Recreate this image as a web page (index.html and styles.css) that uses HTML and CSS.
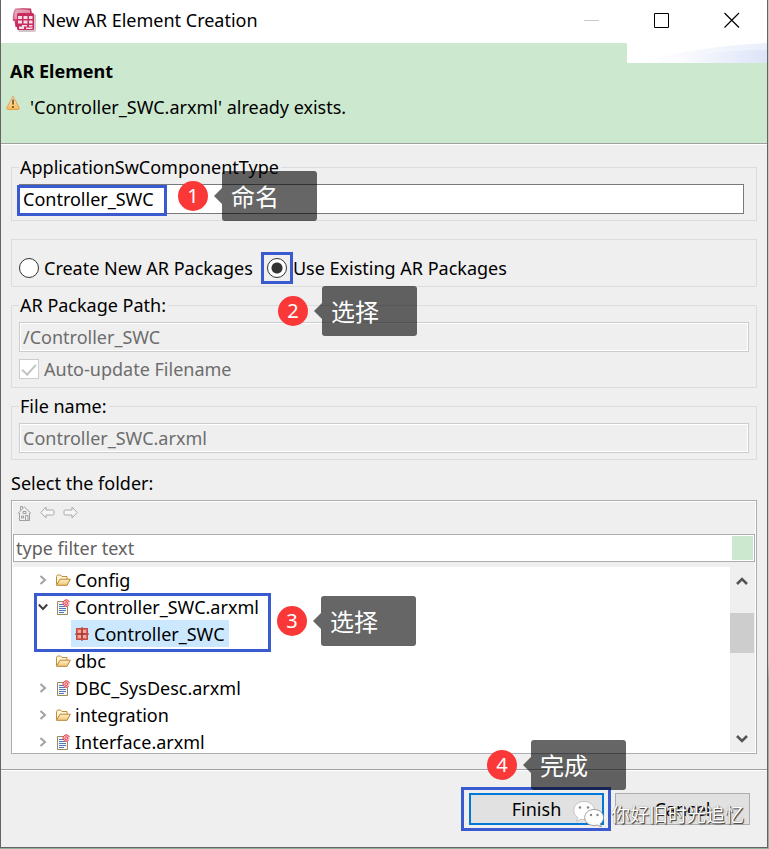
FILE: index.html
```html
<!DOCTYPE html>
<html lang="en">
<head>
<meta charset="utf-8">
<meta name="viewport" content="width=device-width, initial-scale=1">
<title>New AR Element Creation</title>
<link rel="stylesheet" href="styles.css">
</head>
<body>
<svg class="defs" aria-hidden="true">
  <defs>
    <linearGradient id="folderFill" x1="0" y1="0" x2="0" y2="1"><stop offset="0" stop-color="#fdf0c4"/><stop offset="1" stop-color="#efc778"/></linearGradient>
    <linearGradient id="warnFill" x1="0" y1="0" x2="0" y2="1"><stop offset="0" stop-color="#fff3d8"/><stop offset="1" stop-color="#f7b850"/></linearGradient>
    <linearGradient id="appFill" x1="0" y1="0" x2="1" y2="1"><stop offset="0" stop-color="#e2a0b4"/><stop offset="0.5" stop-color="#c2305f"/><stop offset="1" stop-color="#b4224f"/></linearGradient>
    <linearGradient id="bannerFill" x1="0" y1="0" x2="1" y2="0"><stop offset="0" stop-color="#ffffff"/><stop offset="0.35" stop-color="#fafbfe"/><stop offset="1" stop-color="#dce4f7"/></linearGradient>
    <linearGradient id="bannerGlow" x1="0" y1="0" x2="1" y2="0"><stop offset="0" stop-color="#ffffff"/><stop offset="1" stop-color="#e9effb"/></linearGradient>
    <symbol id="folder" viewBox="0 0 16 14">
      <path d="M1.5 11.5V3.5l1-1.500h3l1.500 1.500h5V6" fill="#fff6d8" stroke="#c48a3c"/>
      <path d="M1.500 12.300L5 6.200h10.300l-3.200 6.100z" fill="url(#folderFill)" stroke="#bd8234"/>
    </symbol>
    <symbol id="arxml" viewBox="0 0 14 16">
      <path d="M1.500 2.500H11.500V15.500H1.500z" fill="#f3f7fc" stroke="#9a8a54"/>
      <path d="M3 5.500h4M3 7.500h6M3 9.500h7M3 11.500h7M3 13.500h5" stroke="#5378b4"/>
      <circle cx="10.300" cy="4" r="3.500" fill="#fbc9cc"/>
      <path d="M12.500 6.400A3.200 3.200 0 1 1 13.300 3M10.500 5.800c-2 .2-2.300-2.700-.3-3 2-.2 2 2.600.4 2.700" fill="none" stroke="#e23440"/>
    </symbol>
    <symbol id="chev" viewBox="0 0 8 10"><path d="M1.500 1L6 5 1.500 9" fill="none" stroke="#a2a2a2" stroke-width="2"/></symbol>
  </defs>
</svg>

<header class="titlebar">
  <svg class="app-icon" viewBox="0 0 24 24" aria-hidden="true">
    <path d="M3 .5Q10-.5 19 .5L20 6H6v13H3.500L2.500 13H1Q0 5 3 .5z" fill="url(#appFill)"/>
    <path d="M4 2Q10 1 18 2V5H6v6H2.500Q2 5 4 2z" fill="#efb9c8" opacity=".7"/>
    <rect x="6" y="6" width="18" height="18" rx="2" fill="#d3c6cb"/>
    <rect x="5" y="5" width="17" height="17" rx="1.500" fill="#c62c5f"/>
    <path d="M6 8h4v3H6zM11.500 8h4v3h-4zM17 8h3.500v3H17zM6 12.500h4v3H6zM11.500 12.500h4v3h-4zM17 12.500h3.500v3H17zM7 18.500h3v-1.500h5v1.500h-3V21H7zM17 17h3.500v1.500H17zM14 19.500h6.500V21H14z" fill="#f8dce5"/>
  </svg>
  <h1 class="title">New AR Element Creation</h1>
  <div class="win-controls">
    <button type="button" aria-label="Minimize" disabled><svg viewBox="0 0 16 16"><path d="M0 8.500h15" stroke="#c8c8c8"/></svg></button>
    <button type="button" aria-label="Maximize"><svg viewBox="0 0 16 16"><path d="M.5 1.500h14v14H.5z" fill="none" stroke="#000"/></svg></button>
    <button type="button" aria-label="Close"><svg viewBox="0 0 16 16"><path d="M.5 1L15 15.500M15 1L.5 15.500" stroke="#000" stroke-width="1.200"/></svg></button>
  </div>
</header>

<section class="banner">
  <h2>AR Element</h2>
  <p>
    <svg class="warn" viewBox="0 0 14 16" aria-hidden="true"><path d="M7 1.200L13 12.500Q13.600 14.500 12 14.500H2Q.4 14.500 1 12.500z" fill="url(#warnFill)" stroke="#e0a258"/><path d="M7 4.500v5M7 11v2" stroke="#7a5020" stroke-width="1.700"/></svg>
    <span>'Controller_SWC.arxml' already exists.</span>
  </p>
  <svg class="banner-art" viewBox="0 0 140 20" preserveAspectRatio="none" aria-hidden="true"><path d="M0 0h140v20H0z" fill="#fff"/><path d="M10 20Q70 3 140 0V20z" fill="url(#bannerGlow)"/><path d="M10 20Q80 7 140 7V20z" fill="url(#bannerFill)"/></svg>
</section>

<main class="content">
  <fieldset class="group type-group">
    <legend><label for="type">ApplicationSwComponentType</label></legend>
    <input class="field" id="type" type="text" value="Controller_SWC">
    <span class="mark mark-name"></span>
    <div class="callout callout-1"><span class="num">1</span><span class="tip">命名</span></div>
  </fieldset>

  <fieldset class="group mode-group" aria-label="Package mode">
    <label class="choice"><input type="radio" name="mode"><span>Create New AR Packages</span></label>
    <label class="choice marked"><input type="radio" name="mode" checked><span>Use Existing AR Packages</span></label>
  </fieldset>

  <fieldset class="group">
    <legend><label for="path">AR Package Path:</label></legend>
    <input class="field" id="path" type="text" value="/Controller_SWC" disabled>
    <label class="choice check"><input type="checkbox" checked disabled><span>Auto-update Filename</span></label>
    <div class="callout callout-2"><span class="num">2</span><span class="tip">选择</span></div>
  </fieldset>

  <fieldset class="group">
    <legend><label for="file">File name:</label></legend>
    <input class="field" id="file" type="text" value="Controller_SWC.arxml" disabled>
  </fieldset>

  <label class="folder-label" for="filter">Select the folder:</label>
  <div class="browser">
    <div class="tools">
      <button type="button" aria-label="Home" disabled><svg viewBox="0 0 15 16"><path d="M2.500 8v7.500h10V8M.8 8.500L7.500 2l6.700 6.500M3.500 5V1.500h2V3M6 6.500h3v2H6zM4.500 11h2v2h-2zM8.500 15v-4.500H11V15" fill="none" stroke="#a0a0a0"/></svg></button>
      <button type="button" aria-label="Back" disabled><svg viewBox="0 0 15 16"><path d="M.8 7.500L6 2v3h6.500q1.500 0 1.500 1v3q0 1-1.500 1H6v3z" fill="#f6f6f6" stroke="#aaa"/></svg></button>
      <button type="button" aria-label="Forward" disabled><svg viewBox="0 0 15 16"><path d="M14.200 7.500L9 2v3H2.500Q1 5 1 6v3q0 1 1.500 1H9v3z" fill="#f6f6f6" stroke="#aaa"/></svg></button>
    </div>
    <div class="filter"><input id="filter" type="text" placeholder="type filter text"><button type="button" aria-label="Clear filter"></button></div>
    <div class="tree-area">
      <ul class="tree">
        <li class="row"><svg class="chev"><use href="#chev"/></svg><svg class="ico"><use href="#folder"/></svg><span>Config</span></li>
        <li class="branch">
          <div class="row"><svg class="chev open" viewBox="0 0 10 8"><path d="M.8 1.500L5 6l4.200-4.500" fill="none" stroke="#404040" stroke-width="2"/></svg><svg class="ico"><use href="#arxml"/></svg><span>Controller_SWC.arxml</span></div>
          <ul>
            <li class="row selected"><svg class="pkg" viewBox="0 0 14 14" aria-hidden="true"><path d="M1 1h12v12H1z" fill="#d9675c"/><path d="M3 3h3v3H3zM8 3h3v3H8zM3 8h3v3H3zM8 8h3v3H8z" fill="#f3aa98"/><path d="M7 0v14M0 7h14" stroke="#94292c"/><path d="M1.500 1.500h11v11h-11z" fill="none" stroke="#c04d48"/></svg><span>Controller_SWC</span></li>
          </ul>
          <span class="mark mark-branch"></span>
        </li>
        <li class="row"><span class="chev"></span><svg class="ico"><use href="#folder"/></svg><span>dbc</span></li>
        <li class="row"><svg class="chev"><use href="#chev"/></svg><svg class="ico"><use href="#arxml"/></svg><span>DBC_SysDesc.arxml</span></li>
        <li class="row"><svg class="chev"><use href="#chev"/></svg><svg class="ico"><use href="#folder"/></svg><span>integration</span></li>
        <li class="row"><svg class="chev"><use href="#chev"/></svg><svg class="ico"><use href="#arxml"/></svg><span>Interface.arxml</span></li>
      </ul>
      <div class="scroll">
        <button type="button" aria-label="Scroll up"><svg viewBox="0 0 12 10"><path d="M1 8l5-5 5 5" fill="none" stroke="#555" stroke-width="2.600"/></svg></button>
        <div class="track"><div class="thumb"></div></div>
        <button type="button" aria-label="Scroll down"><svg viewBox="0 0 12 10"><path d="M1 3l5 5 5-5" fill="none" stroke="#555" stroke-width="2.600"/></svg></button>
      </div>
      <div class="callout callout-3"><span class="num">3</span><span class="tip">选择</span></div>
    </div>
  </div>
</main>

<footer class="footer">
  <div class="finish-mark"><button class="btn primary" type="button">Finish</button></div>
  <button class="btn" type="button">Cancel</button>
  <div class="callout callout-4"><span class="num">4</span><span class="tip">完成</span></div>
  <div class="watermark">
    <svg viewBox="0 0 32 28" aria-hidden="true"><path d="M11 1.500C5 1.500.8 5.500.8 10.500c0 3 1.500 5.400 4 7.100L3.500 21.500l4.500-2.300q1.500.4 3 .4c6 0 10.500-4 10.500-9S17 1.500 11 1.500z" fill="#fff" stroke="#bbb" stroke-width=".8"/><path d="M21 9.500c-5.300 0-9.300 3.500-9.300 8s4 8 9.300 8q1.800 0 3.300-.5l4 2-1-3.300c2-1.500 3.200-3.600 3.200-6.200 0-4.500-4-8-9.500-8z" fill="#fff" stroke="#888" stroke-width=".8"/><g fill="#888"><circle cx="7" cy="7.500" r="1.300"/><circle cx="15" cy="7.500" r="1.300"/><circle cx="18" cy="15" r="1.200"/><circle cx="24.500" cy="15" r="1.200"/></g></svg>
    <span>你好旧时光追忆</span>
  </div>
</footer>
</body>
</html>
```
FILE: styles.css
```css
*, *::before, *::after { box-sizing: border-box; }

html {
  height: 100%;
  background: linear-gradient(#c8c8c8 0 78%, #8fb598 80%);
}

body {
  display: flex;
  flex-direction: column;
  height: calc(100vh - 1px);
  min-height: 640px;
  margin: 0 1px 1px 0;
  border: 1px solid #646464;
  border-top: 0;
  background: #efefef;
  color: #000;
  font: 18px/24px "Noto Sans", "Noto Sans CJK SC", sans-serif;
}

button, input { font: inherit; color: inherit; margin: 0; }
button { padding: 0; border: 0; background: none; }
ul { margin: 0; padding: 0; list-style: none; }
svg { display: block; flex: none; }
.defs { position: absolute; width: 0; height: 0; }

.titlebar {
  display: flex;
  flex: none;
  align-items: center;
  height: 43px;
  padding-left: 11px;
  background: #fff;
}
.app-icon { width: 24px; height: 24px; margin-bottom: 4px; }
.title { flex: 1; margin: 0 0 3px 6px; font-size: 18px; font-weight: 400; }
.win-controls { display: flex; }
.win-controls button { display: grid; place-items: center; width: 70px; height: 40px; margin-bottom: 3px; }
.win-controls svg { width: 16px; height: 16px; }

.banner {
  position: relative;
  flex: none;
  height: 102px;
  padding: 16px 9px 0;
  border-bottom: 1px solid #fff;
  background: #cce8cf;
  box-shadow: inset 0 -1px #a0a0a0;
}
.banner h2 { margin: 0 0 12px; font-size: 18px; line-height: 24px; }
.banner p { display: flex; gap: 10px; margin: 0 -4px; }
.warn { width: 14px; height: 16px; }
.banner-art { position: absolute; top: 0; right: 0; width: 140px; height: 20px; }

.content {
  display: flex;
  flex: 1;
  flex-direction: column;
  min-height: 0;
  padding: 10px 10px 15px;
}

.group {
  position: relative;
  flex: none;
  min-width: 0;
  margin: 0 0 6px;
  padding: 5px 7px 6px;
  border: 1px solid #dcdcdc;
}
.group legend { padding: 0 2px 0 1px; }
.type-group { padding-right: 12px; margin-bottom: 18px; }
.field {
  display: block;
  width: 100%;
  height: 30px;
  padding: 0 3px;
  border: 1px solid #7a7a7a;
  border-radius: 0;
  background: #fff;
}
.field:disabled {
  border-color: #cccccc;
  background: #efefef;
  box-shadow: inset 0 0 0 1px #fff;
  color: #6d6d6d;
}

.mode-group { display: flex; gap: 14px; height: 48px; padding: 11px 7px 0; }
.choice { position: relative; display: flex; align-items: center; gap: 5px; height: 34px; }
.choice input {
  flex: none;
  appearance: none;
  width: 20px;
  height: 20px;
  border: 1px solid #333;
  background: #fff;
}
.choice input[type="radio"] { border-radius: 50%; }
.choice input[type="radio"]:checked { background: radial-gradient(circle, #333 0 5px, #fff 6px); }
.marked { gap: 6px; }
.marked::before {
  content: "";
  position: absolute;
  left: -6px;
  width: 32px;
  height: 32px;
  border: 3px solid #3a5bd0;
}
.check { height: 20px; margin: 7px 0 2px; color: #6d6d6d; }
.check input { position: relative; border-color: #ccc; }
.check input::after {
  content: "";
  position: absolute;
  left: 5px;
  top: 1px;
  width: 8px;
  height: 14px;
  border: solid #c4c4c4;
  border-width: 0 2px 2px 0;
  transform: rotate(42deg);
}

.mark { position: absolute; border: 3px solid #3a5bd0; pointer-events: none; }
.mark-name { left: 5px; top: 6px; width: 150px; height: 31px; }
.mark-branch { left: 22px; top: 0; width: 237px; height: 59px; }

.callout { position: absolute; z-index: 2; display: flex; align-items: center; gap: 14px; color: #fff; }
.num {
  width: 30px;
  height: 30px;
  border-radius: 50%;
  background: #fb3838;
  font-size: 20px;
  line-height: 30px;
  text-align: center;
}
.tip {
  position: relative;
  width: 95px;
  height: 50px;
  padding-left: 9px;
  border-radius: 3px;
  background: rgba(0, 0, 0, 0.6);
  font: 24px/50px "Noto Sans CJK SC", sans-serif;
}
.tip::before {
  content: "";
  position: absolute;
  right: 100%;
  top: 17px;
  border: 8px solid transparent;
  border-left: 0;
  border-right-color: rgba(0, 0, 0, 0.6);
}
.callout-1 { left: 166px; top: -8px; }
.callout-2 { left: 266px; top: -31px; }
.callout-3 { left: 264px; top: 29px; }
.callout-4 { right: 141px; top: -30px; }

.folder-label { margin: 5px 0; }
.browser {
  display: flex;
  flex: 1;
  flex-direction: column;
  min-height: 0;
  padding: 1px;
  border: 1px solid #abadb3;
  box-shadow: inset 0 0 0 1px #fff;
}
.tools { display: flex; flex: none; gap: 8px; height: 32px; padding: 3px 4px; }
.tools svg { width: 15px; height: 16px; }
.tools button { height: 16px; }
.filter {
  display: flex;
  flex: none;
  height: 28px;
  margin-bottom: 5px;
  padding: 1px;
  border: 1px solid #abadb3;
  background: #fff;
}
.filter input { flex: 1; min-width: 0; padding: 0 1px; border: 0; background: none; outline: 0; }
.filter input::placeholder { color: #606060; opacity: 1; }
.filter button { width: 21px; background: #cce8cf; }

.tree-area { position: relative; display: flex; flex: 1; min-height: 0; }
.tree { flex: 1; overflow: hidden; background: #fff; }
.tree > :first-child { margin-top: -1px; }
.row { display: flex; align-items: center; height: 27px; padding-left: 26px; }
.branch { position: relative; }
.chev { width: 8px; height: 10px; margin-right: 8px; }
.chev.open { width: 10px; height: 8px; margin: 0 7px 0 -1px; }
.ico { width: 16px; height: 16px; margin-right: 4px; }
.row.selected { width: max-content; margin-left: 58px; padding: 0 4px; gap: 5px; background: #cce8ff; }
.mark-branch { left: 21px; }
.pkg { width: 14px; height: 14px; }
.scroll { display: flex; flex-direction: column; width: 25px; }
.scroll button { display: grid; place-items: center; width: 24px; height: 28px; }
.scroll svg { width: 12px; height: 10px; }
.track { flex: 1; padding-top: 18px; }
.thumb { width: 24px; height: 40px; background: #cdcdcd; }

.footer {
  position: relative;
  display: flex;
  flex: none;
  justify-content: flex-end;
  align-items: center;
  gap: 4px;
  height: 78px;
  padding-right: 17px;
  border-top: 1px solid #a0a0a0;
  box-shadow: inset 0 1px #fff;
}
.finish-mark { padding: 3px 4px 3px 5px; border: 3px solid #3a5bd0; }
.btn { display: block; width: 135px; height: 32px; border: 1px solid #adadad; background: #e1e1e1; }
.btn.primary { border: 2px solid #0078d7; }
.watermark {
  position: absolute;
  right: 23px;
  top: 30px;
  display: flex;
  align-items: center;
  gap: 6px;
  color: #fff;
  font: 19px/28px "Noto Sans CJK SC", sans-serif;
  text-shadow: 1px 1px 1px #333, 0 0 1px #777;
}
.watermark svg { width: 32px; height: 28px; }
```
